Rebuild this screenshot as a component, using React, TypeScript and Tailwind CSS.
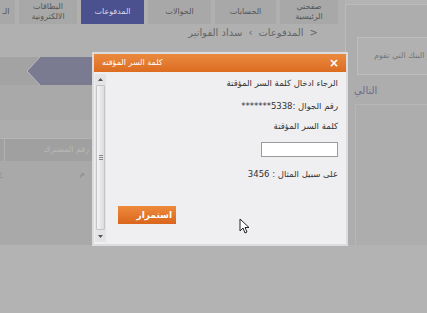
import React from 'react';

const tabs = [
  { label: ['صفحتي', 'الرئيسية'], w: 'w-[58px]' },
  { label: ['الحسابات'], w: 'w-[61px]' },
  { label: ['الحوالات'], w: 'w-[63px]' },
  { label: ['المدفوعات'], w: 'w-[63px]', active: true },
  { label: ['البطاقات', 'الالكترونية'], w: 'w-[58px]' },
  { label: ['الـ'], w: 'w-[18px]' },
];

function Cursor() {
  return (
    <svg className="absolute left-[239px] top-[218px]" width="11" height="16" viewBox="0 0 11 16">
      <path d="M1 1 L1 13 L4 10 L6 15 L8 14 L6 9.5 L10 9.5 Z" fill="#fff" stroke="#222" strokeWidth="1" strokeLinejoin="round" />
    </svg>
  );
}

function Scrollbar() {
  return (
    <div className="mb-[2px] ml-[1px] mt-[2px] flex w-[11px] flex-col items-center bg-[#e4e4e6]">
      <div className="flex h-[11px] items-center justify-center">
        <svg width="5" height="3" viewBox="0 0 5 3"><path d="M0 3 L2.5 0 L5 3 Z" fill="#555" /></svg>
      </div>
      <div className="flex w-[9px] flex-1 items-center justify-center rounded-[1px] border border-[#c4c4c6] bg-gradient-to-r from-[#f4f4f6] to-[#dcdcde]">
        <div className="flex flex-col gap-[1px]">
          <div className="h-[1px] w-[4px] bg-[#888]" />
          <div className="h-[1px] w-[4px] bg-[#888]" />
          <div className="h-[1px] w-[4px] bg-[#888]" />
        </div>
      </div>
      <div className="flex h-[12px] items-center justify-center">
        <svg width="5" height="3" viewBox="0 0 5 3"><path d="M0 0 L2.5 3 L5 0 Z" fill="#555" /></svg>
      </div>
    </div>
  );
}

function Dialog() {
  return (
    <div className="absolute left-[92px] top-[52px] flex h-[194px] w-[256px] flex-col border-2 border-[#dcdcde] bg-[#efeff1]">
      {/* Header */}
      <div className="flex h-[18px] shrink-0 items-center justify-between bg-gradient-to-b from-[#ea8a3e] to-[#dc6c20] pl-[8px] pr-[7px]">
        <span className="text-[8px] leading-none text-white">كلمة السر المؤقته</span>
        <span className="text-[12px] font-bold leading-none text-white">×</span>
      </div>

      {/* Body */}
      <div className="flex flex-1">
        <Scrollbar />
        <div dir="rtl" className="flex flex-1 flex-col items-start pr-[8px] pt-[5px] text-[8.5px] leading-[12px] text-[#333]">
          <p>الرجاء ادخال كلمة السر المؤقتة</p>
          <p className="mt-[11px]">رقم الجوال :5338*******</p>
          <p className="mt-[8px]">كلمة السر المؤقتة</p>
          <div className="mt-[10px] h-[15px] w-[77px] border border-[#9a9a9a] bg-white" />
          <p className="mt-[11px]">على سبيل المثال : 3456</p>
          <button className="ml-[12px] mt-[26px] flex h-[18px] w-[58px] items-center justify-start self-end bg-gradient-to-b from-[#ee8a3a] to-[#d9661c] pr-[4px] text-[9px] font-bold text-white">
            استمرار
          </button>
        </div>
      </div>
    </div>
  );
}

export default function App() {
  return (
    <div
      className="relative h-[313px] w-[427px] overflow-hidden bg-[#b3b3b3]"
      style={{ fontFamily: '"DejaVu Sans", sans-serif' }}
    >
      <div dir="rtl" className="flex h-[245px]">
        {/* Right column */}
        <aside className="w-[82px] shrink-0 pt-[4px]">
          <div dir="ltr" className="flex h-full flex-col items-start border-l border-t border-[#bcbcbc] bg-[#adadad]">
            <div className="ml-[11px] mt-[32px] flex h-[38px] items-center self-stretch border border-r-0 border-[#bdbdbd] bg-[#b1b1b1] pl-[16px]">
              <span dir="rtl" className="whitespace-nowrap text-[8px] text-[#777]">يرجى اختيار البنك التي تقوم</span>
            </div>
            <span className="ml-[8px] mt-[8px] text-[10px] text-[#6c6c88]">التالي</span>
            <div className="ml-[9px] mt-[6px] flex-1 self-stretch border-l border-t border-[#b6b6b6]" />
          </div>
        </aside>

        {/* Main column */}
        <main className="flex flex-1 flex-col bg-[#b0b0b0]">
          <nav className="flex h-[24px] gap-[4px] pr-[7px]">
            {tabs.map((t, i) => (
              <div
                key={i}
                className={`${t.w} flex shrink-0 flex-col items-center justify-center text-[8px] leading-[10px] ${
                  t.active ? 'bg-[#4b508f] text-[#d8d8e6]' : 'bg-[#a8a8a8] text-[#555]'
                }`}
              >
                {t.label.map((l) => (
                  <span key={l} className="whitespace-nowrap">{l}</span>
                ))}
              </div>
            ))}
          </nav>

          <div className="flex h-[17px] items-center gap-[6px] pr-[27px] text-[10px] text-[#666]">
            <span dir="ltr">&gt;</span>
            <span>المدفوعات</span>
            <span>›</span>
            <span>سداد الفواتير</span>
          </div>

          {/* Progress band */}
          <div dir="ltr" className="mt-[16px] flex h-[28px]">
            <div className="w-[30px] bg-[#a3a3a3]" />
            <svg width="13" height="28" viewBox="0 0 13 28" className="bg-[#a3a3a3]">
              <path d="M0 14 L13 0 L13 28 Z" fill="#7a7b90" />
              <path d="M0 14 L13 0 M0 14 L13 28" stroke="#b8b8c0" strokeWidth="1" />
            </svg>
            <div className="flex-1 bg-[#7a7b90]" />
          </div>

          <div className="h-[35px] bg-[#a9a9a9]" />
          <div className="h-[19px] border-b border-[#b4b4b4] bg-[#adadad]" />
          <div dir="ltr" className="flex h-[22px] bg-[#a0a0a0]">
            <div className="w-[8px] border-r border-[#b2b2b2]" />
            <div className="flex w-[84px] items-center justify-end text-[8px] text-[#b9b9b9]">رقم المشترك</div>
          </div>
          <div dir="ltr" className="flex flex-1 items-start bg-[#a9a9a9] pt-[7px] text-[8px] text-[#8a8a8a]">
            <span className="ml-[1px]">ع</span>
            <span className="ml-[77px]">م</span>
          </div>
        </main>
      </div>

      <Dialog />
      <Cursor />
    </div>
  );
}
